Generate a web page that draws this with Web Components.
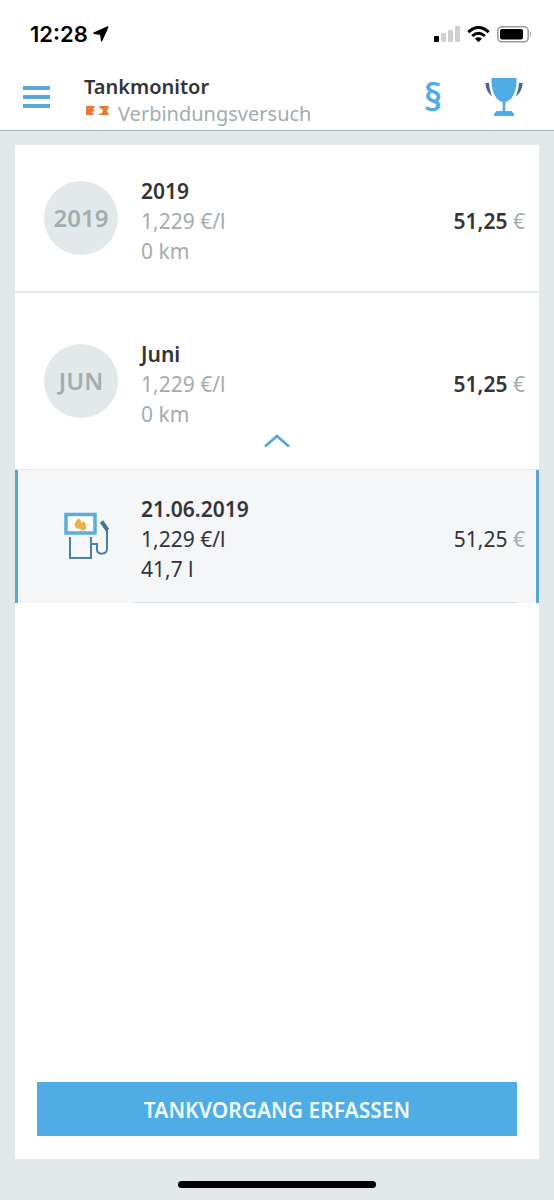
<!DOCTYPE html>
<html lang="de">
<head>
<meta charset="utf-8">
<meta name="viewport" content="width=device-width, initial-scale=1">
<title>Tankmonitor</title>
<style>
  html { --blue: #4face5; --blue-dark: #44749f; --ink: #333438; --muted: #a3adaf; --surface: #e3e9eb; }
  body { margin: 0; font-family: "Noto Sans", sans-serif; font-size: 20px; line-height: 30px; color: var(--ink); }
</style>
</head>
<body>
<fuel-app></fuel-app>
<script>
const define = (name, html, setup) => {
  const template = document.createElement('template');
  template.innerHTML = html;
  customElements.define(name, class extends HTMLElement {
    constructor() {
      super();
      this.attachShadow({ mode: 'open' }).append(template.content.cloneNode(true));
      if (setup) setup(this);
    }
  });
};

define('status-bar', `
  <style>
    :host { display: flex; align-items: center; justify-content: space-between; height: 64px; padding: 4px 21px 0 30px; box-sizing: border-box; color: #000; font: 600 22px/30px Inter, sans-serif; }
    div { display: flex; align-items: center; gap: 5px; }
    .state { gap: 7px; }
    svg { display: block; }
  </style>
  <div><span>12:28</span>
    <svg width="16" height="16" viewBox="0 0 16 16" aria-hidden="true"><path d="M14.800 1 8.600 14.600 7.800 8.200 1 7.200Z" fill="#000" stroke="#000" stroke-width="1.500" stroke-linejoin="round"/></svg>
  </div>
  <div class="state">
    <svg width="26" height="16" viewBox="0 0 26 16" role="img" aria-label="Mobilfunk"><rect x="0" y="10" width="5" height="6" rx="1"/><g fill="#d0d0d0"><rect x="7" y="7" width="5" height="9" rx="1"/><rect x="14" y="4" width="5" height="12" rx="1"/><rect x="21" y="0" width="5" height="16" rx="1"/></g></svg>
    <svg width="23" height="17" viewBox="0 0 23 17" role="img" aria-label="WLAN"><g fill="none" stroke="#000" stroke-width="3"><path d="M1.3 6.2Q11.500-3.200 21.700 6.200"/><path d="M5.200 10Q11.500 4.400 17.800 10"/></g><path d="M8 12.600Q11.500 9.800 15 12.600L11.500 16.300Z"/></svg>
    <svg width="36" height="17" viewBox="0 0 36 17" role="img" aria-label="Batterie"><rect x=".8" y=".8" width="30.400" height="15" rx="4" fill="none" stroke="#999" stroke-width="1.500"/><rect x="3" y="3" width="23" height="10.600" rx="2"/><path d="M33 5.500Q35.500 8.300 33 11Z" fill="#999"/></svg>
  </div>`);

define('app-bar', `
  <style>
    :host { display: flex; align-items: flex-start; height: 67px; padding: 8px 31px 0 23px; box-sizing: border-box; border-bottom: 1px solid #a9b3b7; }
    button { display: flex; align-items: center; justify-content: center; height: 50px; padding: 0; border: 0; background: none; color: var(--blue); font: 600 37px/50px "Noto Sans", sans-serif; }
    .titles { flex: 1; margin-left: 34px; }
    h1 { margin: 0; font-size: 20px; line-height: 30px; font-weight: 600; }
    p { display: flex; gap: 8px; margin: 0; line-height: 24px; color: var(--muted); }
    p svg { margin-top: 4px; }
    .actions { display: flex; gap: 43px; }
  </style>
  <button aria-label="Menü"><svg width="27" height="22" viewBox="0 0 27 22" fill="#58a6dc"><path d="M0 0h27v4H0zM0 9h27v4H0zM0 18h27v4H0z"/></svg></button>
  <div class="titles">
    <h1>Tankmonitor</h1>
    <p><svg width="26" height="10" viewBox="-2 0 26 10" aria-hidden="true"><path d="M0 0H9L7 3 9 5 6 6 8 9H0ZM23 9H11L16 7 17 4 14 2 13 0H23L21 5Z" fill="#e57b35"/></svg><span>Verbindungsversuch</span></p>
  </div>
  <div class="actions">
    <button aria-label="Rechtliches">§</button>
    <button aria-label="Erfolge"><svg width="38" height="40" viewBox="0 0 38 40"><path d="M6.500 1H31.500C32 15 27 23.500 20.300 25V34H26.500L29 37V39H9V37L11.500 34H17.700V25C11 23.500 6 15 6.500 1Z" fill="#4face5"/><path d="M.3 6H4Q4.500 14 7.500 19.500Q1 15.500.3 6ZM37.700 6H34Q33.500 14 30.500 19.500Q37 15.500 37.700 6Z" fill="#44639f"/></svg></button>
  </div>`);

define('fuel-entry', `
  <style>
    :host { display: block; border-bottom: 2px solid #e7ebee; padding: 31px 14px 25px 29px; }
    :host([group]) { padding-top: 46px; padding-bottom: 0; border-bottom-width: 1px; }
    :host([detail]) { padding: 24px 11px 0 26px; border: solid #5aa6d6; border-width: 0 3px; background: #f4f6f8; }
    .row { display: grid; grid-template-columns: 74px 1fr auto; column-gap: 23px; align-items: start; }
    .mark { display: grid; place-items: center; width: 74px; height: 74px; margin-top: 5px; border-radius: 50%; background: var(--surface); color: var(--muted); font-size: 24px; font-weight: 600; }
    :host([detail]) .mark { justify-items: end; box-sizing: border-box; padding-right: 8px; background: none; }
    .amount { align-self: center; font-size: 21px; font-weight: 600; }
    .amount span { color: var(--muted); font-weight: 400; }
    .lines { font-size: 21px; color: var(--muted); }
    h2 { margin: 0; font-size: 21px; line-height: 30px; font-weight: 600; color: var(--ink); }
    :host([detail]) .lines { color: var(--ink); }
    :host([detail]) .amount { font-weight: 400; }
    .line { display: none; height: 1px; margin: 18px 8px 0 90px; background: #dadfe3; }
    :host([detail]) .line { display: block; }
    ::slotted(collapse-toggle) { margin: 0 -14px 0 -29px; }
  </style>
  <div class="row">
    <div class="mark"><slot name="mark"></slot></div>
    <div class="lines"><h2><slot name="title"></slot></h2><slot></slot></div>
    <div class="amount"><slot name="amount"></slot> <span>€</span></div>
  </div>
  <slot name="toggle"></slot>
  <div class="line"></div>`);

define('collapse-toggle', `
  <style>
    :host { display: flex; justify-content: center; }
    button { display: flex; justify-content: center; align-items: flex-start; width: 60px; height: 40px; padding: 5px 0 0; border: 0; background: none; }
  </style>
  <button aria-label="Einklappen" aria-expanded="true"><svg width="26" height="14" viewBox="0 0 26 14"><path d="M1 12.500 13 2 25 12.500" fill="none" stroke="#52a9de" stroke-width="2.600"/></svg></button>`,
  host => {
    const button = host.shadowRoot.querySelector('button');
    button.addEventListener('click', () => {
      const open = button.getAttribute('aria-expanded') !== 'true';
      button.setAttribute('aria-expanded', open);
      host.dispatchEvent(new CustomEvent('toggle-group', { bubbles: true, composed: true, detail: open }));
    });
  });

define('pump-icon', `
  <style>:host { display: block; } svg { display: block; }</style>
  <svg width="46" height="48" viewBox="0 0 46 48" fill="none" aria-hidden="true">
    <rect x="2" y="2.500" width="29" height="18.500" fill="#fff" stroke="#5aaddd" stroke-width="3.500"/>
    <path d="M6 25V46H27V25M27 32H33V38C33 43 43 43 43 37V17" stroke="#4d7fae" stroke-width="2"/>
    <path d="M37.500 9.500 43.500 18" stroke="#44749f" stroke-width="4"/>
    <path d="M14.500 6C12 9 10.500 11 10.500 13A4 4 0 0 0 16 16.500A3.300 3.300 0 0 0 22 13.500C22 12 20.500 10 19.500 9L17.500 11C17 9 16 7.500 14.500 6Z" fill="#e9b44f"/>
  </svg>`);

define('primary-button', `
  <style>
    :host { display: block; }
    button { display: block; width: 100%; height: 54px; padding: 2px 0 0; border: 0; background: var(--blue); color: #effcff; font: 600 21px/30px "Noto Sans", sans-serif; }
  </style>
  <button><slot></slot></button>`);

define('fuel-app', `
  <style>
    :host { display: flex; flex-direction: column; min-height: 100vh; background: var(--surface); }
    header { background: #fff; }
    main { display: flex; flex: 1; flex-direction: column; margin: 14px 15px 0; background: #fff; }
    primary-button { margin: auto 22px 23px; }
    .home { align-self: center; width: 198px; height: 7px; margin: 22px 0 12px; border-radius: 4px; background: #000; }
  </style>
  <header><status-bar></status-bar><app-bar></app-bar></header>
  <main>
    <fuel-entry><span slot="mark">2019</span><span slot="title">2019</span><span slot="amount">51,25</span><div>1,229 €/l</div><div>0 km</div></fuel-entry>
    <fuel-entry group><span slot="mark">JUN</span><span slot="title">Juni</span><span slot="amount">51,25</span><div>1,229 €/l</div><div>0 km</div><collapse-toggle slot="toggle"></collapse-toggle></fuel-entry>
    <fuel-entry detail><pump-icon slot="mark"></pump-icon><span slot="title">21.06.2019</span><span slot="amount">51,25</span><div>1,229 €/l</div><div>41,7 l</div></fuel-entry>
    <primary-button>TANKVORGANG ERFASSEN</primary-button>
  </main>
  <div class="home"></div>`,
  host => host.shadowRoot.addEventListener('toggle-group', e => {
    host.shadowRoot.querySelector('fuel-entry[detail]').style.display = e.detail ? '' : 'none';
  }));
</script>
</body>
</html>
